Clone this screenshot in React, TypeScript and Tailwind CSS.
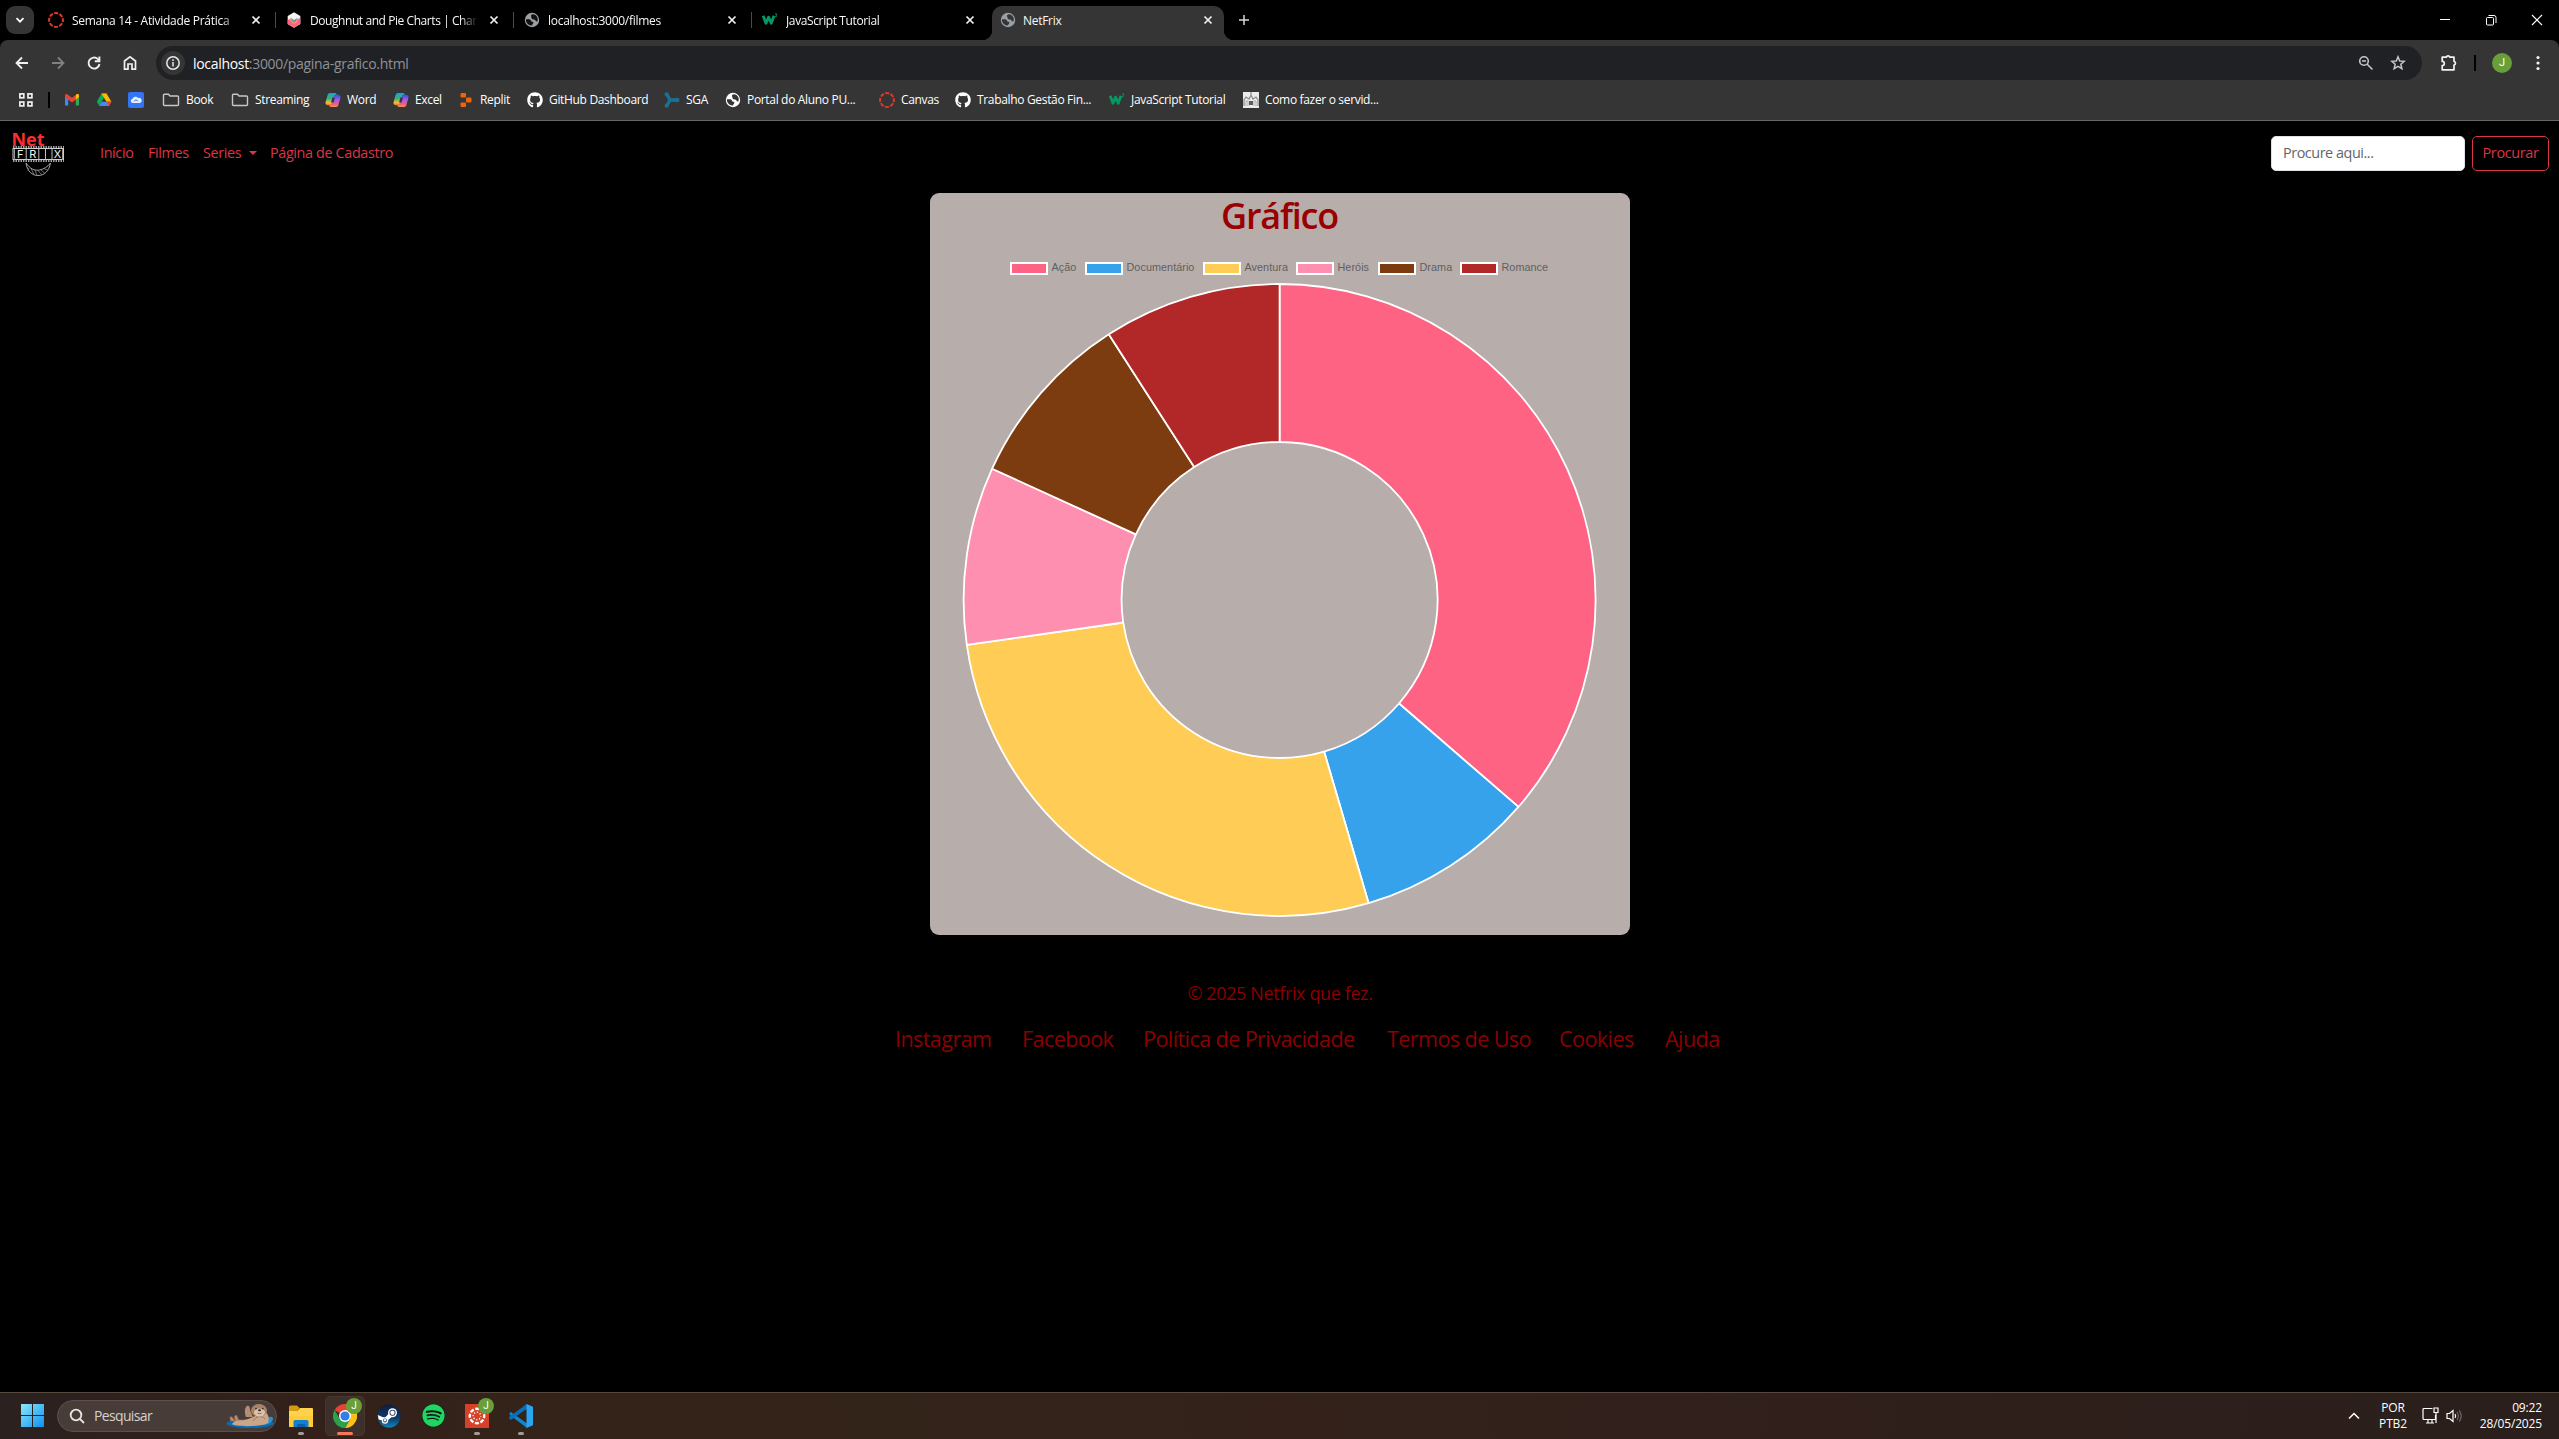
import type { ReactNode } from "react";
import { FaGithub, FaSpotify } from "react-icons/fa";

/* ---------- small icons ---------- */

const Globe = ({ fg, bg }: { fg: string; bg: string }) => (
  <svg width="16" height="16" viewBox="0 0 16 16" className="shrink-0">
    <circle cx="8" cy="8" r="7.2" fill={fg} />
    <path d="M8.6 2.2c2.4.1 4.3 1.6 5 3.8.3 1 .2 2.3-.2 3.3-.9.3-1.7-.1-2-.9-.3-.9-1-1-1.900-1-1.200 0-2-.700-2-1.700 0-.700-.5-1-.5-1.800 0-.9.7-1.500 1.600-1.700z" fill={bg} />
    <path d="M2 7.300h2.600c1.200 0 2.300.6 2.600 1.600.2.700.9.700 1.500.9.800.3.900 1.100.400 1.700-.5.6-.9.9-.9 1.900-3 .1-5.700-1.900-6.200-4.500z" fill={bg} />
  </svg>
);

const CanvasRing = ({ color, size = 16 }: { color: string; size?: number }) => (
  <svg width={size} height={size} viewBox="0 0 16 16" className="shrink-0">
    <circle cx="8" cy="8" r="6.9" fill="none" stroke={color} strokeWidth="2" strokeDasharray="4 1.42" strokeDashoffset="2" />
  </svg>
);

const W3 = () => (
  <svg width="16" height="16" viewBox="0 0 17 16" className="shrink-0">
    <path d="M1.200 3.500L4.200 11.500 7 5l2.800 6.500 3-8" fill="none" stroke="#059862" strokeWidth="3" strokeLinejoin="round" />
    <path d="M13.800 1.500h2l-1 1.400c1.300 0 1.300 1.900-.9 1.600" fill="none" stroke="#059862" strokeWidth=".9" />
  </svg>
);

const Hexagon = () => (
  <svg width="16" height="16" viewBox="0 0 16 16" className="shrink-0">
    <path d="M8 .3l6.300 3.600v8.200L8 15.700 1.700 12.100V3.900z" fill="#f6f3f4" />
    <path d="M1.700 8l2.300-1 4 2.500L12 7l2.300-1v6.100L8 15.700 1.700 12.100z" fill="#ff6384" />
    <path d="M4 5.700l4 2 4-2-.500 4L8 12 4.700 9.600z" fill="#f9a04c" opacity=".85" />
    <path d="M5 5.500l3 3 3-2.500-1 3-2 1.200-2-1.500z" fill="#4b8fe0" opacity=".9" />
  </svg>
);

const TabClose = () => (
  <svg width="10" height="10" viewBox="0 0 10 10" className="shrink-0">
    <path d="M1.500 1.500l7 7M8.500 1.500l-7 7" stroke="#f1f1f1" strokeWidth="1.700" />
  </svg>
);

const Gmail = () => (
  <svg width="16" height="16" viewBox="0 0 16 16">
    <path d="M1 3.500V13.500H4.200V6z" fill="#4285f4" />
    <path d="M15 3.500V13.500H11.800V6z" fill="#34a853" />
    <path d="M1 3.600C1 2.200 2.600 1.700 3.600 2.500L8 5.800l4.400-3.300C13.400 1.700 15 2.200 15 3.600V5.200L8 10.400 1 5.200z" fill="#ea4335" />
    <path d="M11.800 3l.600-.5C13.400 1.700 15 2.200 15 3.600V5.200l-3.200 2.400z" fill="#fbbc04" />
  </svg>
);

const Drive = () => (
  <svg width="16" height="16" viewBox="0 0 16 16">
    <path d="M5.500 1.500h5L8 5.800 3.300 14 .8 9.800z" fill="#0fa958" />
    <path d="M5.500 1.500h5l4.900 8.300h-5z" fill="#ffba00" />
    <path d="M3.300 14l2.500-4.200h9.600L12.900 14z" fill="#4688f4" />
    <path d="M15.400 9.800L12.900 14l-2.500-4.200z" fill="#ea4335" />
  </svg>
);

const Cloud = () => (
  <svg width="16" height="16" viewBox="0 0 16 16">
    <rect width="16" height="16" rx="2" fill="#3376f5" />
    <path d="M4.500 11a2.200 2.200 0 01.1-4.300 3 3 0 015.400-.6 2.500 2.500 0 012 4.900z" fill="#e7effe" />
    <path d="M6 9.500c1-2 3-2 4-.2" stroke="#3376f5" fill="none" />
  </svg>
);

const Folder = () => (
  <svg width="18" height="16" viewBox="0 0 18 16">
    <path d="M1.500 3.200q0-1 1-1H6.500L8 4h7.500q1 0 1 1v7.500q0 1-1 1h-13q-1 0-1-1z" fill="none" stroke="#c7c7c7" strokeWidth="1.400" />
  </svg>
);

const Copilot = () => (
  <svg width="16" height="16" viewBox="0 0 16 16">
    <defs>
      <linearGradient id="copilotA" x1="0" y1="0" x2="0" y2="1">
        <stop offset="0" stopColor="#1b9de2" />
        <stop offset=".45" stopColor="#3bb273" />
        <stop offset=".8" stopColor="#f5c031" />
        <stop offset="1" stopColor="#f0682f" />
      </linearGradient>
      <linearGradient id="copilotB" x1="0" y1="0" x2="0" y2="1">
        <stop offset="0" stopColor="#2a52d8" />
        <stop offset=".4" stopColor="#a05be8" />
        <stop offset=".75" stopColor="#ee5a91" />
        <stop offset="1" stopColor="#f8923f" />
      </linearGradient>
    </defs>
    <path d="M4.800 1h5c1 0 1.600.6 1.900 1.500L12 3.500H9.700L7 12c-.3.900-.9 1.300-1.800 1.300H3C1 13.300.1 11.700.6 10l2-7C3 1.700 3.700 1 4.800 1z" fill="url(#copilotA)" />
    <path d="M11.200 15h-5c-1 0-1.600-.6-1.900-1.500L4 12.500h2.300L9 4c.3-.9.900-1.300 1.800-1.300H13c2 0 2.900 1.600 2.400 3.300l-2 7c-.4 1.300-1.100 2-2.200 2z" fill="url(#copilotB)" />
    <path d="M7.400 5.500h2.500L8.600 10.500H6.100z" fill="#353535" />
  </svg>
);

const Replit = () => (
  <svg width="16" height="16" viewBox="0 0 16 16">
    <rect x="2.500" y="1" width="5.500" height="4.600" rx="1" fill="#f26207" />
    <rect x="8" y="5.600" width="5.500" height="4.800" rx="1" fill="#f26207" />
    <rect x="2.500" y="10.400" width="5.500" height="4.600" rx="1" fill="#f26207" />
  </svg>
);

const Sga = () => (
  <svg width="16" height="16" viewBox="0 0 16 16">
    <path d="M3 2.500l3 5.500L3 13.500M6 8h7" fill="none" stroke="#1b7194" strokeWidth="3.400" strokeLinejoin="round" />
    <circle cx="2.700" cy="2.300" r="2.100" fill="#1b7194" />
    <circle cx="2.700" cy="13.700" r="2.100" fill="#1b7194" />
    <circle cx="13.200" cy="8" r="2.300" fill="#1b7194" />
  </svg>
);

const Building = () => (
  <svg width="16" height="16" viewBox="0 0 16 16">
    <rect width="16" height="16" fill="#ececec" />
    <path d="M8 0v4M1 14V8l2-3 3 2 2-4 2 4 3-2 2 3v6" fill="none" stroke="#8b8b8b" strokeWidth="1.200" />
    <path d="M3 14V9h2v5M11 14V9h2v5" fill="none" stroke="#b1b1b1" />
    <rect x="6" y="9" width="4" height="4" fill="#5c5c5c" />
  </svg>
);

/* ---------- tabs ---------- */

function Tab({ icon, title, active, divider }: { icon: ReactNode; title: string; active?: boolean; divider?: boolean }) {
  return (
    <div
      className={
        active
          ? "relative mt-1.5 flex h-[34px] w-[232px] items-center rounded-t-[10px] bg-[#353535] pr-[11px] pb-1.5 pl-2"
          : "relative flex h-10 w-[238px] items-center pr-[15px] pl-[10px]"
      }
    >
      {icon}
      <span
        className={
          active
            ? "ml-[7px] w-[167px] overflow-hidden pt-0.5 whitespace-nowrap"
            : "ml-2 w-[168px] overflow-hidden pt-0.5 whitespace-nowrap [mask-image:linear-gradient(to_right,#000_150px,transparent_168px)]"
        }
      >
        {title}
      </span>
      <span className="ml-auto flex">
        <TabClose />
      </span>
      {divider && <span className="absolute top-3 right-0 h-4 w-px bg-[#4a4a4a]" />}
      {active && (
        <>
          <span className="absolute bottom-0 -left-2.5 size-2.5 bg-[radial-gradient(circle_at_0_0,transparent_10px,#353535_10.5px)]" />
          <span className="absolute -right-2.5 bottom-0 size-2.5 bg-[radial-gradient(circle_at_100%_0,transparent_10px,#353535_10.5px)]" />
        </>
      )}
    </div>
  );
}

function TabStrip() {
  return (
    <div className="flex h-10 bg-black text-[12px] tracking-[-0.29px] text-[#f8f8f8]">
      <div className="mt-1.5 mr-1 ml-1.5 flex size-7 items-center justify-center rounded-[9px] bg-[#353535]">
        <svg width="10" height="10" viewBox="0 0 10 10">
          <path d="M1.500 3.200L5 6.700l3.500-3.500" fill="none" stroke="#fff" strokeWidth="1.700" />
        </svg>
      </div>
      <Tab icon={<CanvasRing color="#e0392b" />} title="Semana 14 - Atividade Prática" divider />
      <div className="tracking-[-0.43px]">
        <Tab icon={<Hexagon />} title="Doughnut and Pie Charts | Char" divider />
      </div>
      <Tab icon={<Globe fg="#9aa0a6" bg="#111" />} title="localhost:3000/filmes" divider />
      <div className="tracking-[-0.38px]">
        <Tab icon={<W3 />} title="JavaScript Tutorial" />
      </div>
      <div className="ml-0.5">
        <Tab icon={<Globe fg="#9aa0a6" bg="#353535" />} title="NetFrix" active />
      </div>
      <svg width="12" height="12" viewBox="0 0 12 12" className="mt-3.5 ml-3.5">
        <path d="M6 1v10M1 6h10" stroke="#d9d9d9" strokeWidth="1.500" />
      </svg>
      <div className="mr-4 ml-auto flex items-center gap-[34px]">
        <svg width="12" height="12" viewBox="0 0 12 12">
          <path d="M1 5.500h10" stroke="#fff" />
        </svg>
        <svg width="12" height="12" viewBox="0 0 12 12" fill="none" stroke="#fff">
          <rect x="1.500" y="3.500" width="7" height="7.500" rx="1" />
          <path d="M3.500 1.500h5.500q2 0 2 2v5.500" />
        </svg>
        <svg width="12" height="12" viewBox="0 0 12 12">
          <path d="M1 1l10 10M11 1L1 11" stroke="#fff" strokeWidth="1.100" />
        </svg>
      </div>
    </div>
  );
}

/* ---------- toolbar ---------- */

function Toolbar() {
  return (
    <div className="flex h-[46px] items-center rounded-t-[8px] bg-[#353535]">
      <div className="ml-3.5 flex w-[142px] gap-5">
        <svg width="16" height="16" viewBox="0 0 16 16" fill="none" stroke="#f0f0f0" strokeWidth="1.800">
          <path d="M14 8H3M8 2.500L2.500 8 8 13.500" />
        </svg>
        <svg width="16" height="16" viewBox="0 0 16 16" fill="none" stroke="#808080" strokeWidth="1.800">
          <path d="M2 8h11M8 2.500L13.500 8 8 13.500" />
        </svg>
        <svg width="16" height="16" viewBox="0 0 16 16" fill="none" stroke="#f0f0f0" strokeWidth="1.900">
          <path d="M13.500 9a5.500 5.500 0 11-1.600-4.900L13.500 5.700" />
          <path d="M13.400 1.500v4.700H8.800" />
        </svg>
        <svg width="16" height="16" viewBox="0 0 16 16" fill="none" stroke="#f0f0f0" strokeWidth="1.700">
          <path d="M2.500 14.200V6L8 1.800 13.500 6v8.200H10V9H6v5.200z" />
        </svg>
      </div>
      <div className="flex h-[34px] w-[2266px] items-center rounded-full bg-[#202124] pr-4 pl-[5px]">
        <span className="flex size-6 items-center justify-center rounded-full bg-[#353535]">
          <svg width="16" height="16" viewBox="0 0 16 16" fill="none" stroke="#e8e8e8" strokeWidth="1.500">
            <circle cx="8" cy="8" r="6.200" />
            <path d="M8 7v4.500M8 4.300v1.600" />
          </svg>
        </span>
        <span className="ml-2 text-[14px] tracking-[-0.31px] text-[#8f9297]">
          <span className="text-white">localhost</span>:3000/pagina-grafico.html
        </span>
        <svg width="16" height="16" viewBox="0 0 16 16" fill="none" stroke="#c3c5c8" strokeWidth="1.600" className="ml-auto">
          <circle cx="6" cy="6" r="4.300" />
          <path d="M9.200 9.200L14.500 14.500M4 6h4" />
        </svg>
        <svg width="16" height="16" viewBox="0 0 16 16" fill="none" stroke="#c3c5c8" strokeWidth="1.500" className="ml-4">
          <path d="M8 1.800l1.700 4.200 4.600.3-3.500 3 1.100 4.400L8 11.300l-3.900 2.400 1.100-4.400-3.500-3 4.600-.3z" />
        </svg>
      </div>
      <svg width="18" height="18" viewBox="0 0 18 18" className="ml-[18px]">
        <path d="M6.300 3.200a1.900 1.900 0 013.600 0H14v4.100a1.900 1.900 0 010 3.700v4.800H2.200v-4.200a2 2 0 000-4.200V3.200z" fill="none" stroke="#f2f2f2" strokeWidth="1.700" strokeLinejoin="round" />
      </svg>
      <span className="ml-4 h-4 w-0.5 bg-black" />
      <span className="ml-4 flex size-5 items-center justify-center rounded-full bg-[#689f38] font-['Roboto',sans-serif] text-[11px] text-white">J</span>
      <svg width="4" height="16" viewBox="0 0 4 16" fill="#f2f2f2" className="ml-6">
        <circle cx="2" cy="2.500" r="1.600" />
        <circle cx="2" cy="8" r="1.600" />
        <circle cx="2" cy="13.500" r="1.600" />
      </svg>
    </div>
  );
}

const bookmarks: { icon: ReactNode; label: string; width: string }[] = [
  { icon: <Folder />, label: "Book", width: "w-[69px]" },
  { icon: <Folder />, label: "Streaming", width: "w-[94px]" },
  { icon: <Copilot />, label: "Word", width: "w-[68px]" },
  { icon: <Copilot />, label: "Excel", width: "w-[65px]" },
  { icon: <Replit />, label: "Replit", width: "w-[69px]" },
  { icon: <FaGithub size={16} color="#fff" />, label: "GitHub Dashboard", width: "w-[137px]" },
  { icon: <Sga />, label: "SGA", width: "w-[61px]" },
  { icon: <Globe fg="#ffffff" bg="#353535" />, label: "Portal do Aluno PU...", width: "w-[154px]" },
  { icon: <CanvasRing color="#e0392b" />, label: "Canvas", width: "w-[76px]" },
  { icon: <FaGithub size={16} color="#fff" />, label: "Trabalho Gestão Fin...", width: "w-[154px]" },
  { icon: <W3 />, label: "JavaScript Tutorial", width: "w-[134px]" },
  { icon: <Building />, label: "Como fazer o servid...", width: "w-[160px]" },
];

function BookmarksBar() {
  return (
    <div className="flex h-[35px] items-center border-b border-[#666] bg-[#353535] pb-1.5 text-[12px] tracking-[-0.33px] text-white">
      <svg width="14" height="14" viewBox="0 0 14 14" fill="none" stroke="#f0f0f0" strokeWidth="1.700" className="ml-[19px]">
        <rect x=".9" y=".9" width="3.900" height="3.900" />
        <rect x="9" y=".9" width="3.900" height="3.900" />
        <rect x=".9" y="9" width="3.900" height="3.900" />
        <rect x="9" y="9" width="3.900" height="3.900" />
      </svg>
      <span className="ml-[15px] h-4 w-0.5 bg-black" />
      <div className="ml-3.5 flex w-[98px] gap-4">
        <Gmail />
        <Drive />
        <Cloud />
      </div>
      {bookmarks.map((b) => (
        <div key={b.label} className={`flex shrink-0 items-center gap-1.5 whitespace-nowrap ${b.width}`}>
          {b.icon}
          <span>{b.label}</span>
        </div>
      ))}
    </div>
  );
}

/* ---------- site ---------- */

const Logo = () => (
  <svg width="56" height="50" viewBox="0 0 56 50" fill="none" overflow="visible">
    <text x="-0.500" y="15.500" fill="#ff2d2d" fontFamily="Open Sans, sans-serif" fontWeight="700" fontSize="18" textLength="33" lengthAdjust="spacingAndGlyphs">Net</text>
    <rect x="1" y="18.500" width="50.500" height="11" stroke="#cfcfcf" strokeWidth="1" />
    <path d="M1 17h51M1 31h51" stroke="#cfcfcf" strokeWidth="1.600" strokeDasharray="1.500 1" />
    <path d="M14.200 19v11M26.800 19v11M33.500 19v11M40 19v11" stroke="#bdbdbd" />
    <path d="M50.500 19v11M2.500 19v11" stroke="#999" />
    <g fill="#f0f0f0" fontFamily="Inter, sans-serif" fontSize="11">
      <text x="5" y="28">F</text>
      <text x="17.200" y="28">R</text>
      <text x="41.800" y="28">X</text>
    </g>
    <path d="M14 33c1 8 6 12.500 12 12.500s11-4 12.500-12.500M14 33c4 6 9 8 13.500 7s8-3 11-7" stroke="#b5b5b5" strokeWidth=".9" />
    <path d="M19 38.500l3 6M23 40l2 5.500M26 40.500l4 4.500M29 40l4 3.500M32 38.500l4 2M17 38l-1 3" stroke="#888" strokeWidth=".8" />
  </svg>
);

function SiteNav() {
  return (
    <nav className="flex h-16 items-center bg-black pr-[10px] pl-3 text-[14.4px] text-[#dc3545]">
      <div className="flex h-full w-[88px] items-start pt-[9px]">
        <Logo />
      </div>
      <div className="flex tracking-[-0.37px]">
        <a className="w-12">Início</a>
        <a className="w-[55px]">Filmes</a>
        <a className="flex w-[67px] items-center">
          Series
          <span className="ml-[8px] border-x-[4px] border-t-[4px] border-x-transparent border-t-[#dc3545]" />
        </a>
        <a>Página de Cadastro</a>
      </div>
      <form className="ml-auto flex gap-[7px]">
        <div className="flex h-[35px] w-[194px] items-center rounded-[5px] border border-[#dee2e6] bg-white px-[11px] tracking-[-0.45px] text-[#5f656b]">Procure aqui...</div>
        <div className="flex h-[35px] w-[77px] items-center justify-center rounded-[5px] border border-[#dc3545] tracking-[-0.35px]">Procurar</div>
      </form>
    </nav>
  );
}

const genres: { name: string; votes: number; color: string; swatch: string; width: string }[] = [
  { name: "Ação", votes: 4, color: "#ff6384", swatch: "bg-[#ff6384]", width: "w-[75px]" },
  { name: "Documentário", votes: 1, color: "#36a2eb", swatch: "bg-[#36a2eb]", width: "w-[118px]" },
  { name: "Aventura", votes: 3, color: "#ffcd56", swatch: "bg-[#ffcd56]", width: "w-[93px]" },
  { name: "Heróis", votes: 1, color: "#ff8fb1", swatch: "bg-[#ff8fb1]", width: "w-[82px]" },
  { name: "Drama", votes: 1, color: "#7d3c10", swatch: "bg-[#7d3c10]", width: "w-[82px]" },
  { name: "Romance", votes: 1, color: "#b22829", swatch: "bg-[#b22829]", width: "w-[90px]" },
];

function Doughnut() {
  const outer = 316;
  const inner = 158;
  const c = 320;
  const total = genres.reduce((sum, g) => sum + g.votes, 0);
  const point = (r: number, turn: number) => {
    const a = turn * 2 * Math.PI - Math.PI / 2;
    return `${(c + r * Math.cos(a)).toFixed(2)} ${(c + r * Math.sin(a)).toFixed(2)}`;
  };
  let before = 0;
  return (
    <svg width="640" height="640" viewBox="0.4 0 640 640" stroke="#fff" strokeWidth="1.800" strokeLinejoin="bevel">
      {genres.map((g) => {
        const start = before / total;
        before += g.votes;
        const end = before / total;
        return (
          <path
            key={g.name}
            fill={g.color}
            d={`M${point(outer, start)}A${outer} ${outer} 0 0 1 ${point(outer, end)}L${point(inner, end)}A${inner} ${inner} 0 0 0 ${point(inner, start)}Z`}
          />
        );
      })}
    </svg>
  );
}

function ChartCard() {
  return (
    <section className="mx-auto mt-2 flex h-[742px] w-[700px] flex-col items-center rounded-[9px] bg-[#b7adab]">
      <h1 className="h-[43px] pt-px text-[36px] leading-[43px] font-semibold tracking-[-1.2px] text-[#9b0000]">Gráfico</h1>
      <div className="mt-[26px] flex h-[13px] w-[540px] items-center font-['Liberation_Sans',sans-serif] text-[10.8px] leading-[13px] tracking-[0.06px] text-[#5f5f5f]">
        {genres.map((g) => (
          <div key={g.name} className={`flex shrink-0 items-center gap-1 ${g.width}`}>
            <span className={`h-[13px] w-[38px] border-2 border-white ${g.swatch}`} />
            <span className="pb-0.5">{g.name}</span>
          </div>
        ))}
      </div>
      <div className="mt-[5px]">
        <Doughnut />
      </div>
    </section>
  );
}

function SiteFooter() {
  return (
    <footer className="mt-[45px] text-[#8b0000]">
      <p className="pl-px text-center text-[18px] leading-[27px] tracking-[-0.38px]">© 2025 Netfrix que fez.</p>
      <div className="mt-4 flex pl-[895px] text-[21.6px] leading-8 tracking-[-0.6px] whitespace-nowrap">
        <a className="w-[127px]">Instagram</a>
        <a className="w-[121px]">Facebook</a>
        <a className="w-[244px]">Política de Privacidade</a>
        <a className="w-[172px]">Termos de Uso</a>
        <a className="w-[106px]">Cookies</a>
        <a>Ajuda</a>
      </div>
    </footer>
  );
}

/* ---------- taskbar ---------- */

const Otter = () => (
  <svg width="48" height="26" viewBox="0 0 48 26">
    <ellipse cx="24" cy="20.500" rx="23.500" ry="4.500" fill="#0b6bb5" />
    <path d="M38 17c5-4 9-4 9-1s-5 6-10 6z" fill="#2693d8" />
    <path d="M6 21c3 3 30 3 36-1 2-5 0-9-3-12L27 14c-5 2-9 4-13 3-3-1-5 0-8 4z" fill="#c9a58a" />
    <path d="M5 18c-2-3-1-5 1-4l3 4M10 18c-3-4-1-7 1-5l2 5" fill="#b48d72" stroke="#8e6b54" strokeWidth=".6" />
    <path d="M20 14c-2-5-1-10 1-11s3 1 3 4l3 7z" fill="#b48d72" />
    <path d="M27 18c3-5 9-6 12-2" stroke="#9b765d" fill="none" />
    <ellipse cx="33" cy="7.500" rx="8" ry="6.500" fill="#a98367" />
    <ellipse cx="33.500" cy="9.500" rx="5.500" ry="4" fill="#dcc3ab" />
    <ellipse cx="33.500" cy="7.300" rx="1.500" ry="1" fill="#2b211c" />
    <circle cx="30" cy="5.600" r=".8" fill="#241b17" />
    <circle cx="36.700" cy="5.600" r=".8" fill="#241b17" />
    <path d="M31.500 10q2 1.500 4 0" stroke="#5c4436" fill="none" strokeWidth=".7" />
  </svg>
);

const WindowsLogo = () => (
  <svg width="23" height="23" viewBox="0 0 23 23">
    <defs>
      <linearGradient id="win" x1="0" y1="0" x2="1" y2="1">
        <stop offset="0" stopColor="#8ae8fb" />
        <stop offset="1" stopColor="#0e90f0" />
      </linearGradient>
    </defs>
    <path d="M0 .5Q0 0 .5 0H11V11H0zM12 0h10.500q.5 0 .5.500V11H12zM0 12h11v11H.5q-.5 0-.5-.5zM12 12h11v10.500q0 .5-.5.5H12z" fill="url(#win)" />
  </svg>
);

const Explorer = () => (
  <svg width="24" height="24" viewBox="0 0 24 24">
    <path d="M0 3q0-1.500 1.500-1.500H8L10.500 4 8 7H0z" fill="#d69b10" />
    <path d="M0 7h8l3-3h12q1 0 1 1v18H0z" fill="#ffd24d" />
    <path d="M0 12h24v11H0z" fill="#ffc72e" opacity=".6" />
    <path d="M4.500 23v-5.500q0-1.500 1.500-1.500h12q1.500 0 1.500 1.500V23z" fill="#1280cf" />
    <path d="M8 20h8.500v3H8z" fill="#0a5fa5" />
  </svg>
);

const Chrome = () => (
  <svg width="24" height="24" viewBox="0 0 24 24">
    <path d="M12 12L1.600 6A12 12 0 0122.400 6z" fill="#ea4335" />
    <path d="M12 12V6h10.400A12 12 0 0112 24L17.200 15z" fill="#fbc116" />
    <path d="M12 12l5.200 3L12 24A12 12 0 011.600 6L6.800 15z" fill="#2ba14b" />
    <circle cx="12" cy="12" r="6" fill="#fff" />
    <circle cx="12" cy="12" r="4.600" fill="#2f7de9" />
  </svg>
);

const Steam = () => (
  <svg width="24" height="24" viewBox="0 0 24 24">
    <defs>
      <linearGradient id="steam" x1="0" y1="0" x2="0" y2="1">
        <stop offset="0" stopColor="#0f1b3d" />
        <stop offset=".6" stopColor="#0f3c6b" />
        <stop offset="1" stopColor="#1285bb" />
      </linearGradient>
    </defs>
    <circle cx="12" cy="12" r="11.500" fill="url(#steam)" />
    <path d="M.8 11l7 3 4-4.500 3 3.500-5.500 4.500L1.600 15.500z" fill="#fff" />
    <circle cx="8" cy="16.500" r="3.200" fill="#fff" />
    <circle cx="8" cy="16.500" r="1.900" fill="#0f3c6b" />
    <circle cx="8" cy="16.300" r="1.200" fill="#fff" />
    <circle cx="15.500" cy="8.700" r="4.500" fill="#fff" />
    <circle cx="15.500" cy="8.700" r="3" fill="#10284f" />
    <circle cx="15.500" cy="8.700" r="2.200" fill="#fff" />
  </svg>
);

const CanvasApp = () => (
  <svg width="24" height="24" viewBox="0 0 24 24">
    <rect width="24" height="24" fill="#d64027" />
    <circle cx="12" cy="12" r="7.200" fill="none" stroke="#fff" strokeWidth="2.400" strokeDasharray="4.100 1.555" strokeDashoffset="2" />
    <circle cx="12" cy="12" r="3.800" fill="none" stroke="#fff" strokeWidth="1.300" strokeDasharray="1.300 1.685" strokeDashoffset=".6" />
  </svg>
);

const VsCode = () => (
  <svg width="24" height="24" viewBox="0 0 24 24">
    <path d="M.3 9.300L2 8l16 11.500V24L.8 11z" fill="#1085d2" />
    <path d="M.3 14.700L18 5V0L.3 13z" fill="#0b6db4" />
    <path d="M.3 14.700L2 16 18 4.500V0L.3 13z" fill="#0b6db4" />
    <path d="M17.500 0L24 2.800v18.400L17.500 24z" fill="#2aa5f2" />
  </svg>
);

const Badge = () => (
  <span className="absolute -top-1.5 -right-[5px] flex size-4 items-center justify-center rounded-full bg-[#689f38] font-['Roboto',sans-serif] text-[10px] leading-none text-white">J</span>
);

function TaskApp({ children, running, active, badge }: { children: ReactNode; running?: boolean; active?: boolean; badge?: boolean }) {
  return (
    <div className={active ? "relative flex h-10 w-10 items-center justify-center rounded-[5px] border border-[#46372f] bg-[#3d2f29]" : "relative flex h-10 w-10 items-center justify-center"}>
      <span className="relative">
        {children}
        {badge && <Badge />}
      </span>
      {running && <span className="absolute bottom-px h-[3px] w-1.5 rounded-full bg-[#a39b97]" />}
      {active && <span className="absolute bottom-0 h-[3px] w-4 rounded-full bg-[#f4795b]" />}
    </div>
  );
}

function Taskbar() {
  return (
    <div className="flex h-[47px] items-center border-t border-[#54483f] bg-[linear-gradient(90deg,#2b2120_0px,#33201a_300px,#332319_500px,#33241a_900px,#33211b_1400px,#2f1f1b_2000px,#2a1f1c_2559px)] pb-px pl-[21px] text-white">
      <WindowsLogo />
      <div className="ml-[13px] flex h-8 w-[220px] items-center rounded-full border border-[#5d4f4b] bg-[#483c39] pl-[11px]">
        <svg width="16" height="16" viewBox="0 0 16 16" fill="none" stroke="#e8e4e2" strokeWidth="1.800">
          <circle cx="7" cy="7" r="5.300" />
          <path d="M11 11l4 4" />
        </svg>
        <span className="ml-[9px] text-[14px] tracking-[-0.65px] text-[#d6d0ce]">Pesquisar</span>
        <span className="mr-[2px] ml-auto">
          <Otter />
        </span>
      </div>
      <div className="ml-1 flex gap-1">
        <TaskApp running><Explorer /></TaskApp>
        <TaskApp active badge><Chrome /></TaskApp>
        <TaskApp><Steam /></TaskApp>
        <TaskApp>
          <span className="flex size-[23px] rounded-full bg-[#14171a]">
            <FaSpotify size={23} color="#1ed760" />
          </span>
        </TaskApp>
        <TaskApp running badge><CanvasApp /></TaskApp>
        <TaskApp running><VsCode /></TaskApp>
      </div>
      <div className="mr-[17px] ml-auto flex items-center text-[12px] leading-4 tracking-[-0.15px]">
        <svg width="12" height="8" viewBox="0 0 12 8" className="mr-[18px]">
          <path d="M1 6.500L6 1.500l5 5" fill="none" stroke="#fff" strokeWidth="1.500" />
        </svg>
        <div className="w-[30px] text-center">
          <div>POR</div>
          <div>PTB2</div>
        </div>
        <svg width="17" height="17" viewBox="0 0 17 17" fill="none" stroke="#fff" strokeWidth="1.200" className="ml-[14px]">
          <path d="M10.500 1.500H2q-1 0-1 1v9q0 1 1 1h11.500V8M4 16h8M6 12.500V16M10 12.500V16" />
          <path d="M12 1h4v4.500h-4zM14 5.500V16" />
        </svg>
        <svg width="17" height="16" viewBox="0 0 17 16" fill="none" stroke="#fff" strokeWidth="1.200" className="ml-[7px]">
          <path d="M1 5.500h2.500L7 2.500v11L3.500 10.500H1z" />
          <path d="M9 6q1.300 2 0 4" />
          <path d="M11 4q2.700 4 0 8M13.200 2.300q4 5.700 0 11.400" stroke="#6f6562" />
        </svg>
        <div className="ml-[15px] w-[64px] text-right">
          <div>09:22</div>
          <div>28/05/2025</div>
        </div>
      </div>
    </div>
  );
}

export default function App() {
  return (
    <div className="flex h-[1439px] w-[2559px] flex-col overflow-hidden bg-black font-['Open_Sans','Noto_Sans',sans-serif]">
      <TabStrip />
      <Toolbar />
      <BookmarksBar />
      <main className="flex-1">
        <SiteNav />
        <ChartCard />
        <SiteFooter />
      </main>
      <Taskbar />
    </div>
  );
}
